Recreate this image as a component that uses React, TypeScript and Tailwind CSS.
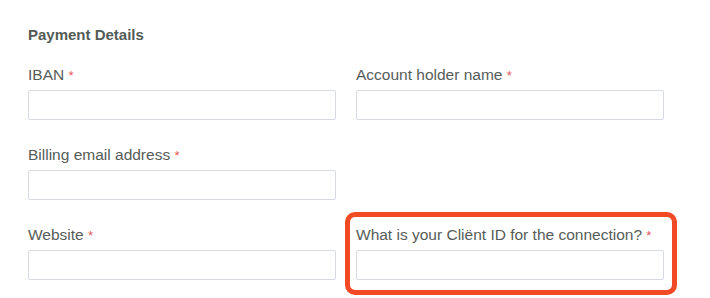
const fieldsLeft = ["IBAN", "Billing email address", "Website"];

type FieldProps = {
  label: string;
  highlight?: boolean;
};

const Field = ({ label, highlight }: FieldProps) => (
  <div className="relative flex flex-col gap-[5px]">
    {highlight && (
      <span className="pointer-events-none absolute -left-[11px] -top-[13px] -right-[13px] -bottom-[15px] rounded-[10px] border-[5px] border-[#f24a25]" />
    )}
    <label className="h-5 text-[15.5px] leading-5 text-[#565c59]">
      {label} <span className="text-[13px] text-[#e5575a]">*</span>
    </label>
    <input
      type="text"
      className="h-[30px] w-full rounded-[2px] border border-[#d8dae3] bg-white px-2 text-[15px] outline-none"
    />
  </div>
);

export default function App() {
  return (
    <div className="min-h-screen bg-white pl-[28px] pt-[25px] font-['Liberation_Sans',Arial,sans-serif]">
      <h2 className="text-[15px] font-bold leading-5 text-[#535b57]">Payment Details</h2>
      <div className="mt-5 grid grid-cols-[308px_308px] gap-x-5 gap-y-[25px]">
        <Field label={fieldsLeft[0]} />
        <Field label="Account holder name" />
        <Field label={fieldsLeft[1]} />
        <div />
        <Field label={fieldsLeft[2]} />
        <Field label="What is your Cliënt ID for the connection?" highlight />
      </div>
    </div>
  );
}
